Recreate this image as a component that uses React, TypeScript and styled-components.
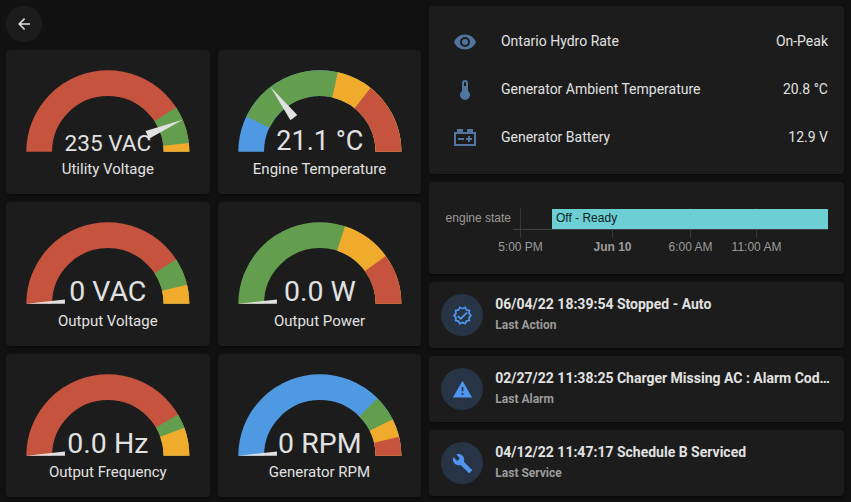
import React from 'react';
import styled, { createGlobalStyle } from 'styled-components';

const GlobalStyle = createGlobalStyle`
  * { box-sizing: border-box; }
  body {
    margin: 0;
    background: #111111;
    color: #e1e1e1;
    font-family: Roboto, "Liberation Sans", sans-serif;
    overflow: hidden;
  }
`;

const red = '#c5533d';
const green = '#629e4e';
const yellow = '#f0ab2d';
const blue = '#4f99e3';

const Page = styled.main`
  display: flex;
  gap: 8px;
  width: 851px;
  height: 502px;
  padding: 6px 7px 0 6px;
`;

const GaugeColumn = styled.section`
  width: 415.3px;
  display: flex;
  flex-direction: column;
  gap: 8.25px;
`;

const StatusColumn = styled.section`
  flex: 1;
  min-width: 0;
  display: flex;
  flex-direction: column;
  gap: 8px;
`;

const Card = styled.div`
  background: #1c1c1c;
  border-radius: 4px;
  box-shadow: 0 2px 2px rgba(0, 0, 0, 0.14), 0 1px 5px rgba(0, 0, 0, 0.12), 0 3px 1px -2px rgba(0, 0, 0, 0.2);
`;

const BackButton = styled.button`
  width: 36px;
  height: 36px;
  padding: 0;
  border: 0;
  border-radius: 50%;
  background: #1c1c1c;
  color: #e1e1e1;
  display: flex;
  align-items: center;
  justify-content: center;
`;

const GaugeGrid = styled.div`
  display: grid;
  grid-template-columns: repeat(2, 203.66px);
  grid-template-rows: repeat(3, 143.66px);
  gap: 8px;
`;

const GaugeCard = styled(Card)`
  padding: 16px;
  display: flex;
  flex-direction: column;
  align-items: center;
`;

const GaugeSvg = styled.svg`
  width: 100%;
  height: auto;
  display: block;
  flex: none;
  overflow: visible;
`;

const GaugeValue = styled.text<{ $size: number }>`
  font-size: ${(p) => p.$size / 1.717}px;
  fill: #e1e1e1;
  text-anchor: middle;
`;

const GaugeName = styled.div`
  margin-top: 8px;
  font-size: 15px;
  line-height: 18px;
  white-space: nowrap;
`;

const EntitiesCard = styled(Card)`
  height: 168px;
  padding: 16px;
  display: flex;
  flex-direction: column;
  gap: 8px;
`;

const EntityRow = styled.div`
  height: 40px;
  display: flex;
  align-items: center;
  font-size: 14px;
  line-height: 20px;
`;

const EntityIcon = styled.div`
  width: 40px;
  height: 40px;
  display: flex;
  align-items: center;
  justify-content: center;
  color: #52759f;
`;

const EntityName = styled.div`
  flex: 1;
  margin: -2px 0 0 15.7px;
`;

const EntityState = styled.div`
  margin-top: -2px;
`;

const HistoryCard = styled(Card)`
  height: 92px;
`;

const HistoryChart = styled.svg`
  display: block;
  font-family: "Liberation Sans", Arial, sans-serif;
  font-size: 12px;
`;

const ChartLabel = styled.text<{ $strong?: boolean; $dark?: boolean }>`
  fill: ${(p) => (p.$dark ? '#111c1d' : '#9b9b9b')};
  font-weight: ${(p) => (p.$strong ? 700 : 400)};
`;

const EventCard = styled(Card)`
  height: 66px;
  padding: 12px;
  display: flex;
  align-items: center;
  gap: 12px;
`;

const EventIcon = styled.div`
  flex: none;
  width: 42px;
  height: 42px;
  border-radius: 50%;
  background: #273445;
  color: #4f94ee;
  display: flex;
  align-items: center;
  justify-content: center;
`;

const EventText = styled.div`
  flex: 1;
  min-width: 0;
  padding-bottom: 2px;
`;

const EventTitle = styled.div`
  font-size: 14px;
  font-weight: 700;
  line-height: 21px;
  white-space: nowrap;
  overflow: hidden;
  text-overflow: ellipsis;
`;

const EventSubtitle = styled.div`
  font-size: 12px;
  font-weight: 700;
  line-height: 20px;
  color: #9b9b9b;
`;

const icons = {
  back: 'M20,11V13H8L13.5,18.5L12.08,19.92L4.16,12L12.08,4.08L13.5,5.5L8,11H20Z',
  eye: 'M12,9A3,3 0 0,0 9,12A3,3 0 0,0 12,15A3,3 0 0,0 15,12A3,3 0 0,0 12,9M12,17A5,5 0 0,1 7,12A5,5 0 0,1 12,7A5,5 0 0,1 17,12A5,5 0 0,1 12,17M12,4.5C7,4.5 2.73,7.61 1,12C2.73,16.39 7,19.5 12,19.5C17,19.5 21.27,16.39 23,12C21.27,7.61 17,4.5 12,4.5Z',
  thermometer: 'M15 13V5A3 3 0 0 0 9 5V13A5 5 0 1 0 15 13M12 4A1 1 0 0 1 13 5V8H11V5A1 1 0 0 1 12 4Z',
  battery: 'M4,3V6H1V20H23V6H20V3H14V6H10V3H4M3,8H21V18H3V8M15,10V12H13V14H15V16H17V14H19V12H17V10H15M5,12V14H11V12H5Z',
  check: 'M23 12L20.56 14.78L20.9 18.46L17.29 19.28L15.4 22.46L12 21L8.6 22.47L6.71 19.29L3.1 18.47L3.44 14.78L1 12L3.44 9.21L3.1 5.53L6.71 4.72L8.6 1.54L12 3L15.4 1.54L17.29 4.72L20.9 5.54L20.56 9.22L23 12M20.33 12L18.5 9.89L18.74 7.1L16 6.5L14.58 4.07L12 5.18L9.42 4.07L8 6.5L5.26 7.09L5.5 9.88L3.67 12L5.5 14.1L5.26 16.9L8 17.5L9.42 19.93L12 18.81L14.58 19.92L16 17.5L18.74 16.89L18.5 14.1L20.33 12M16.59 7.58L10 14.17L7.41 11.59L6 13L10 17L18 9L16.59 7.58Z',
  alert: 'M13 14H11V9H13M13 18H11V16H13M1 21H23L12 2L1 21Z',
  wrench: 'M22.7,19L13.6,9.9C14.5,7.6 14,4.9 12.1,3C10.1,1 7.1,0.6 4.7,1.7L9,6L6,9L1.6,4.7C0.4,7.1 0.9,10.1 2.9,12.1C4.8,14 7.5,14.5 9.8,13.6L18.9,22.7C19.3,23.1 19.9,23.1 20.3,22.7L22.6,20.4C23.1,20 23.1,19.3 22.7,19Z',
};

const Icon = ({ name, size }: { name: keyof typeof icons; size: number }) => (
  <svg width={size} height={size} viewBox="0 0 24 24" fill="currentColor">
    <path d={icons[name]} />
  </svg>
);

interface GaugeProps {
  name: string;
  value: string;
  size: number;
  baseline: number;
  needle: number;
  levels: [number, string][];
}

// Each level runs from its start angle to the right end; later levels cover earlier ones.
const Gauge = ({ name, value, size, baseline, needle, levels }: GaugeProps) => (
  <GaugeCard>
    <GaugeSvg viewBox="-50 -50 100 50">
      <clipPath id="dial">
        <rect x={-50} y={-50} width={100} height={50} />
      </clipPath>
      {levels.map(([angle, color]) => {
        const a = (angle * Math.PI) / 180;
        return (
          <path
            key={angle}
            d={`M ${-40 * Math.cos(a)} ${-40 * Math.sin(a)} A 40 40 0 0 1 40 0`}
            fill="none"
            stroke={color}
            strokeWidth={15}
          />
        );
      })}
      <g clipPath="url(#dial)">
        <path d="M -25 -2.5 L -47.5 0 L -25 2.5 Z" fill="#e1e1e1" transform={`rotate(${needle})`} />
      </g>
      <GaugeValue $size={size} x={0} y={baseline}>{value}</GaugeValue>
    </GaugeSvg>
    <GaugeName>{name}</GaugeName>
  </GaugeCard>
);

const gauges: GaugeProps[] = [
  { name: 'Utility Voltage', value: '235 VAC', size: 22.6, baseline: -0.6, needle: 156.8, levels: [[0, red], [146.8, green], [173.7, yellow]] },
  { name: 'Engine Temperature', value: '21.1 °C', size: 27, baseline: -1.1, needle: 52.8, levels: [[0, blue], [25.7, green], [102.8, yellow], [128.5, red]] },
  { name: 'Output Voltage', value: '0 VAC', size: 28.5, baseline: -1.5, needle: 0, levels: [[0, red], [146.8, green], [166.5, yellow]] },
  { name: 'Output Power', value: '0.0 W', size: 28.5, baseline: -1.5, needle: 0, levels: [[0, green], [108, yellow], [144, red]] },
  { name: 'Output Frequency', value: '0.0 Hz', size: 28.5, baseline: -1.5, needle: 0, levels: [[0, red], [149.6, green], [159.9, yellow]] },
  { name: 'Generator RPM', value: '0 RPM', size: 28.5, baseline: -1.5, needle: 0, levels: [[0, blue], [135, green], [153.3, yellow], [166.5, red]] },
];

const entities: { icon: keyof typeof icons; name: string; state: string }[] = [
  { icon: 'eye', name: 'Ontario Hydro Rate', state: 'On-Peak' },
  { icon: 'thermometer', name: 'Generator Ambient Temperature', state: '20.8 °C' },
  { icon: 'battery', name: 'Generator Battery', state: '12.9 V' },
];

const ticks = [
  { x: 91, label: '5:00 PM' },
  { x: 183, label: 'Jun 10', strong: true },
  { x: 261, label: '6:00 AM' },
  { x: 327, label: '11:00 AM' },
];

const events: { icon: keyof typeof icons; title: string; subtitle: string }[] = [
  { icon: 'check', title: '06/04/22 18:39:54 Stopped - Auto', subtitle: 'Last Action' },
  { icon: 'alert', title: '02/27/22 11:38:25 Charger Missing AC : Alarm Cod…', subtitle: 'Last Alarm' },
  { icon: 'wrench', title: '04/12/22 11:47:17 Schedule B Serviced', subtitle: 'Last Service' },
];

export default function App() {
  return (
    <>
      <GlobalStyle />
      <Page>
        <GaugeColumn>
          <BackButton aria-label="Back">
            <Icon name="back" size={18} />
          </BackButton>
          <GaugeGrid>
            {gauges.map((g) => (
              <Gauge key={g.name} {...g} />
            ))}
          </GaugeGrid>
        </GaugeColumn>
        <StatusColumn>
          <EntitiesCard>
            {entities.map((e) => (
              <EntityRow key={e.name}>
                <EntityIcon>
                  <Icon name={e.icon} size={24} />
                </EntityIcon>
                <EntityName>{e.name}</EntityName>
                <EntityState>{e.state}</EntityState>
              </EntityRow>
            ))}
          </EntitiesCard>
          <HistoryCard>
            <HistoryChart width="415" height="92">
              {ticks.map((t) => (
                <rect key={t.x} x={t.x} y={26} width={1} height={30} fill="#363636" />
              ))}
              <rect x={123} y={27} width={276} height={20} fill="#6ccfd4" />
              <rect x={84} y={47} width={315} height={1} fill="#3d4142" />
              <ChartLabel x={82} y={40} textAnchor="end">engine state</ChartLabel>
              <ChartLabel x={127} y={40} $dark>Off - Ready</ChartLabel>
              {ticks.map((t) => (
                <ChartLabel key={t.label} x={t.x + 0.5} y={69} textAnchor="middle" $strong={t.strong}>
                  {t.label}
                </ChartLabel>
              ))}
            </HistoryChart>
          </HistoryCard>
          {events.map((e) => (
            <EventCard key={e.subtitle}>
              <EventIcon>
                <Icon name={e.icon} size={21} />
              </EventIcon>
              <EventText>
                <EventTitle>{e.title}</EventTitle>
                <EventSubtitle>{e.subtitle}</EventSubtitle>
              </EventText>
            </EventCard>
          ))}
        </StatusColumn>
      </Page>
    </>
  );
}
